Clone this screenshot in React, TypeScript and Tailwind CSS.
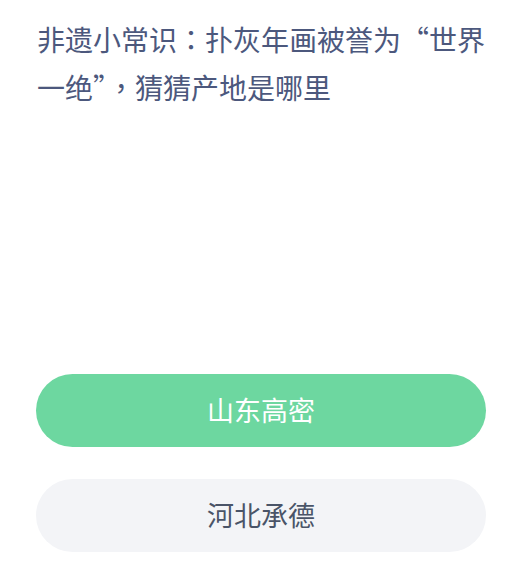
export default function App() {
  const font = { fontFamily: '"Noto Sans CJK SC", "Noto Sans", sans-serif' };
  const titleFont = { fontFamily: '"Noto Sans CJK TC", "Noto Sans CJK SC", sans-serif' };
  return (
    <div className="w-[505px] h-[568px] bg-white overflow-hidden" style={font}>
      <div className="pl-[37px] pr-[12px] pt-[15px]">
        <p className="text-[28px] leading-[48px] text-[#4c587d]" style={titleFont}>
          非遗小常识：扑灰年画被誉为“世界一绝”，猜猜产地是哪里
        </p>
      </div>
      <div className="mt-[263px] pl-[36px] pr-[19px] flex flex-col gap-[32px]">
        <button className="h-[73px] w-full rounded-full bg-[#6dd7a0] text-white text-[27px] flex items-center justify-center">
          山东高密
        </button>
        <button className="h-[73px] w-full rounded-full bg-[#f3f4f7] text-[#4a5468] text-[27px] flex items-center justify-center">
          河北承德
        </button>
      </div>
    </div>
  );
}
